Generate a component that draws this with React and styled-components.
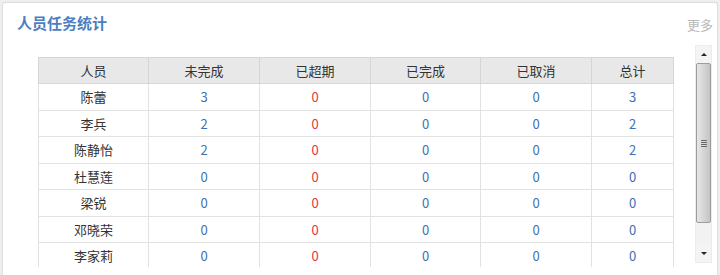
import React from "react";
import styled, { createGlobalStyle } from "styled-components";

const GlobalStyle = createGlobalStyle`
  html, body {
    margin: 0;
    height: 275px;
    overflow: hidden;
    background: #eeeeee;
    font-family: "Noto Sans CJK SC", "Liberation Sans", sans-serif;
  }
`;

// Panel
const Panel = styled.div`
  margin: 2px 2px 0 2px;
  height: 273px;
  box-sizing: border-box;
  border: 1px solid #dddddd;
  border-bottom: none;
  border-radius: 3px 3px 0 0;
  background: #ffffff;
  display: flex;
  flex-direction: column;
  overflow: hidden;
`;

const PanelHeader = styled.div`
  height: 42px;
  flex-shrink: 0;
  display: flex;
  justify-content: space-between;
  align-items: flex-start;
  padding: 0 4px 0 14px;
`;

const Title = styled.h3`
  margin: 10px 0 0 0;
  font-size: 15px;
  line-height: 20px;
  font-weight: bold;
  color: #4a7fc1;
`;

const More = styled.a`
  margin-top: 13px;
  font-size: 13px;
  line-height: 18px;
  color: #b8b8b8;
  text-decoration: none;
`;

const PanelBody = styled.div`
  flex: 1;
  display: flex;
  align-items: flex-start;
  min-height: 0;
`;

const ScrollArea = styled.div`
  flex: 1;
  height: 222px;
  padding: 12px 0 0 35px;
  box-sizing: border-box;
  overflow: hidden;
`;

// Table
const Table = styled.table`
  width: 635px;
  table-layout: fixed;
  border-collapse: collapse;
  font-size: 13px;
  text-align: center;
`;

const HeadCell = styled.th`
  height: 25px;
  padding: 0;
  background: #e8e8e8;
  border: 1px solid #d6d6d6;
  font-weight: normal;
  color: #333333;
`;

const Row = styled.tr`
  height: 26.5px;
`;

const Cell = styled.td`
  padding: 0;
  border: 1px solid #e2e2e2;
  color: ${(p) => (p.tone === "red" ? "#e8333a" : p.tone === "blue" ? "#3d6fb4" : "#333333")};
`;

// Scrollbar
const ScrollBar = styled.div`
  width: 17px;
  height: 218px;
  margin-right: 5px;
  display: flex;
  flex-direction: column;
  background: #f2f2f2;
  border: 1px solid #ececec;
  box-sizing: border-box;
`;

const ArrowButton = styled.div`
  height: 17px;
  flex-shrink: 0;
  display: flex;
  align-items: center;
  justify-content: center;
  background: #f4f4f4;

  &::after {
    content: "";
    border-left: 3px solid transparent;
    border-right: 3px solid transparent;
    ${(p) =>
      p.down ? "border-top: 3px solid #222;" : "border-bottom: 3px solid #222;"}
  }
`;

const Thumb = styled.div`
  height: 160px;
  flex-shrink: 0;
  box-sizing: border-box;
  border: 1px solid #9c9c9c;
  border-radius: 2px;
  background: linear-gradient(to right, #e6e6e6, #d2d2d2 60%, #c4c4c4);
  display: flex;
  align-items: center;
  justify-content: center;
`;

const Grip = styled.div`
  width: 6px;
  display: flex;
  flex-direction: column;
  gap: 1px;

  span {
    display: block;
    height: 1px;
    background: #6a6a6a;
  }
`;

const Track = styled.div`
  flex: 1;
`;

const columns = [110, 111, 111, 110, 111, 82];
const headers = ["人员", "未完成", "已超期", "已完成", "已取消", "总计"];

const rows = [
  { name: "陈蕾", todo: 3, overdue: 0, done: 0, cancel: 0, total: 3 },
  { name: "李兵", todo: 2, overdue: 0, done: 0, cancel: 0, total: 2 },
  { name: "陈静怡", todo: 2, overdue: 0, done: 0, cancel: 0, total: 2 },
  { name: "杜慧莲", todo: 0, overdue: 0, done: 0, cancel: 0, total: 0 },
  { name: "梁锐", todo: 0, overdue: 0, done: 0, cancel: 0, total: 0 },
  { name: "邓晓荣", todo: 0, overdue: 0, done: 0, cancel: 0, total: 0 },
  { name: "李家莉", todo: 0, overdue: 0, done: 0, cancel: 0, total: 0 },
];

const App = () => {
  return (
    <>
      <GlobalStyle />
      <Panel>
        <PanelHeader>
          <Title>人员任务统计</Title>
          <More href="#">更多</More>
        </PanelHeader>
        <PanelBody>
          <ScrollArea>
            <Table>
              <colgroup>
                {columns.map((w, i) => (
                  <col key={i} style={{ width: w }} />
                ))}
              </colgroup>
              <thead>
                <tr>
                  {headers.map((h) => (
                    <HeadCell key={h}>{h}</HeadCell>
                  ))}
                </tr>
              </thead>
              <tbody>
                {rows.map((r) => (
                  <Row key={r.name}>
                    <Cell>{r.name}</Cell>
                    <Cell tone="blue">{r.todo}</Cell>
                    <Cell tone="red">{r.overdue}</Cell>
                    <Cell tone="blue">{r.done}</Cell>
                    <Cell tone="blue">{r.cancel}</Cell>
                    <Cell tone="blue">{r.total}</Cell>
                  </Row>
                ))}
              </tbody>
            </Table>
          </ScrollArea>
          <ScrollBar>
            <ArrowButton />
            <Thumb>
              <Grip>
                <span />
                <span />
                <span />
                <span />
              </Grip>
            </Thumb>
            <Track />
            <ArrowButton down />
          </ScrollBar>
        </PanelBody>
      </Panel>
    </>
  );
};

export default App;
